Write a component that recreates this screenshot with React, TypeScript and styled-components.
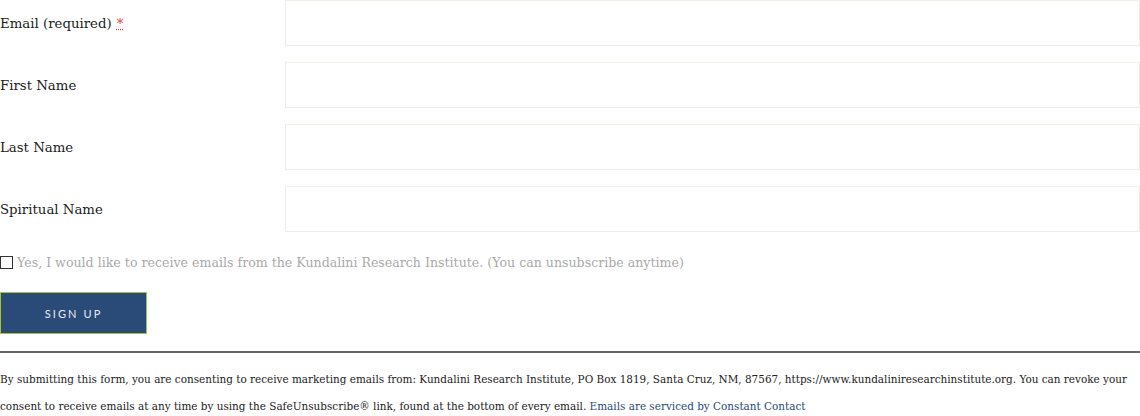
import React from "react";
import styled, { createGlobalStyle } from "styled-components";

const Global = createGlobalStyle`
  html, body { margin: 0; padding: 0; background: #fff; }
  body { font-family: "DejaVu Serif", serif; color: #222; }
  * { box-sizing: border-box; }
`;

const Form = styled.form`
  width: 1140px;
  display: flex;
  flex-direction: column;
`;

const Fields = styled.div`
  display: grid;
  grid-template-columns: 285px 1fr;
  row-gap: 16px;
`;

const Label = styled.label`
  display: flex;
  align-items: center;
  font-size: 13.3px;
  color: #222;
  height: 46px;
`;

const Req = styled.span`
  color: #e04040;
  margin-left: 5px;
  text-decoration: underline dotted #e04040;
`;

const Input = styled.input`
  height: 46px;
  width: 100%;
  border: 1px solid #efebe6;
  border-top-color: #f5efe8;
  background: #fff;
  outline: none;
`;

const CheckRow = styled.label`
  display: flex;
  align-items: center;
  margin-top: 22px;
  font-size: 12.6px;
  color: #aaa;
  height: 16px;
`;

const Box = styled.span`
  width: 13px;
  height: 13px;
  border: 1px solid #333;
  margin-right: 4px;
  flex: none;
`;

const Button = styled.button`
  margin-top: 22px;
  width: 147px;
  height: 42px;
  background: #2a4a78;
  border: 1px solid #a4c23a;
  color: #e8ecf2;
  font-family: Lato, "Liberation Sans", sans-serif;
  font-size: 11px;
  letter-spacing: 2.1px;
  padding: 0;
  cursor: pointer;
`;

const Divider = styled.hr`
  margin: 17px 0 0;
  border: none;
  border-top: 2px solid #666;
  width: 1140px;
`;

const Fine = styled.p`
  margin: 13px 0 0;
  font-size: 10.44px;
  line-height: 27px;
  color: #222;
`;

const Link = styled.a`
  color: #2a4a78;
  text-decoration: none;
`;

const fields = [
  { label: "Email (required)", req: true },
  { label: "First Name" },
  { label: "Last Name" },
  { label: "Spiritual Name" },
];

export default function App() {
  return (
    <>
      <Global />
      <Form onSubmit={(e) => e.preventDefault()}>
        <Fields>
          {fields.map((f) => (
            <React.Fragment key={f.label}>
              <Label>
                {f.label}
                {f.req && <Req>*</Req>}
              </Label>
              <Input type="text" />
            </React.Fragment>
          ))}
        </Fields>
        <CheckRow>
          <Box />
          Yes, I would like to receive emails from the Kundalini Research Institute. (You can unsubscribe anytime)
        </CheckRow>
        <div>
          <Button type="submit">SIGN UP</Button>
        </div>
        <Divider />
        <Fine>
          By submitting this form, you are consenting to receive marketing emails from: Kundalini Research Institute, PO Box 1819, Santa Cruz, NM, 87567, https://www.kundaliniresearchinstitute.org. You can revoke your consent to receive emails at any time by using the SafeUnsubscribe® link, found at the bottom of every email.{" "}
          <Link href="#">Emails are serviced by Constant Contact</Link>
        </Fine>
      </Form>
    </>
  );
}
